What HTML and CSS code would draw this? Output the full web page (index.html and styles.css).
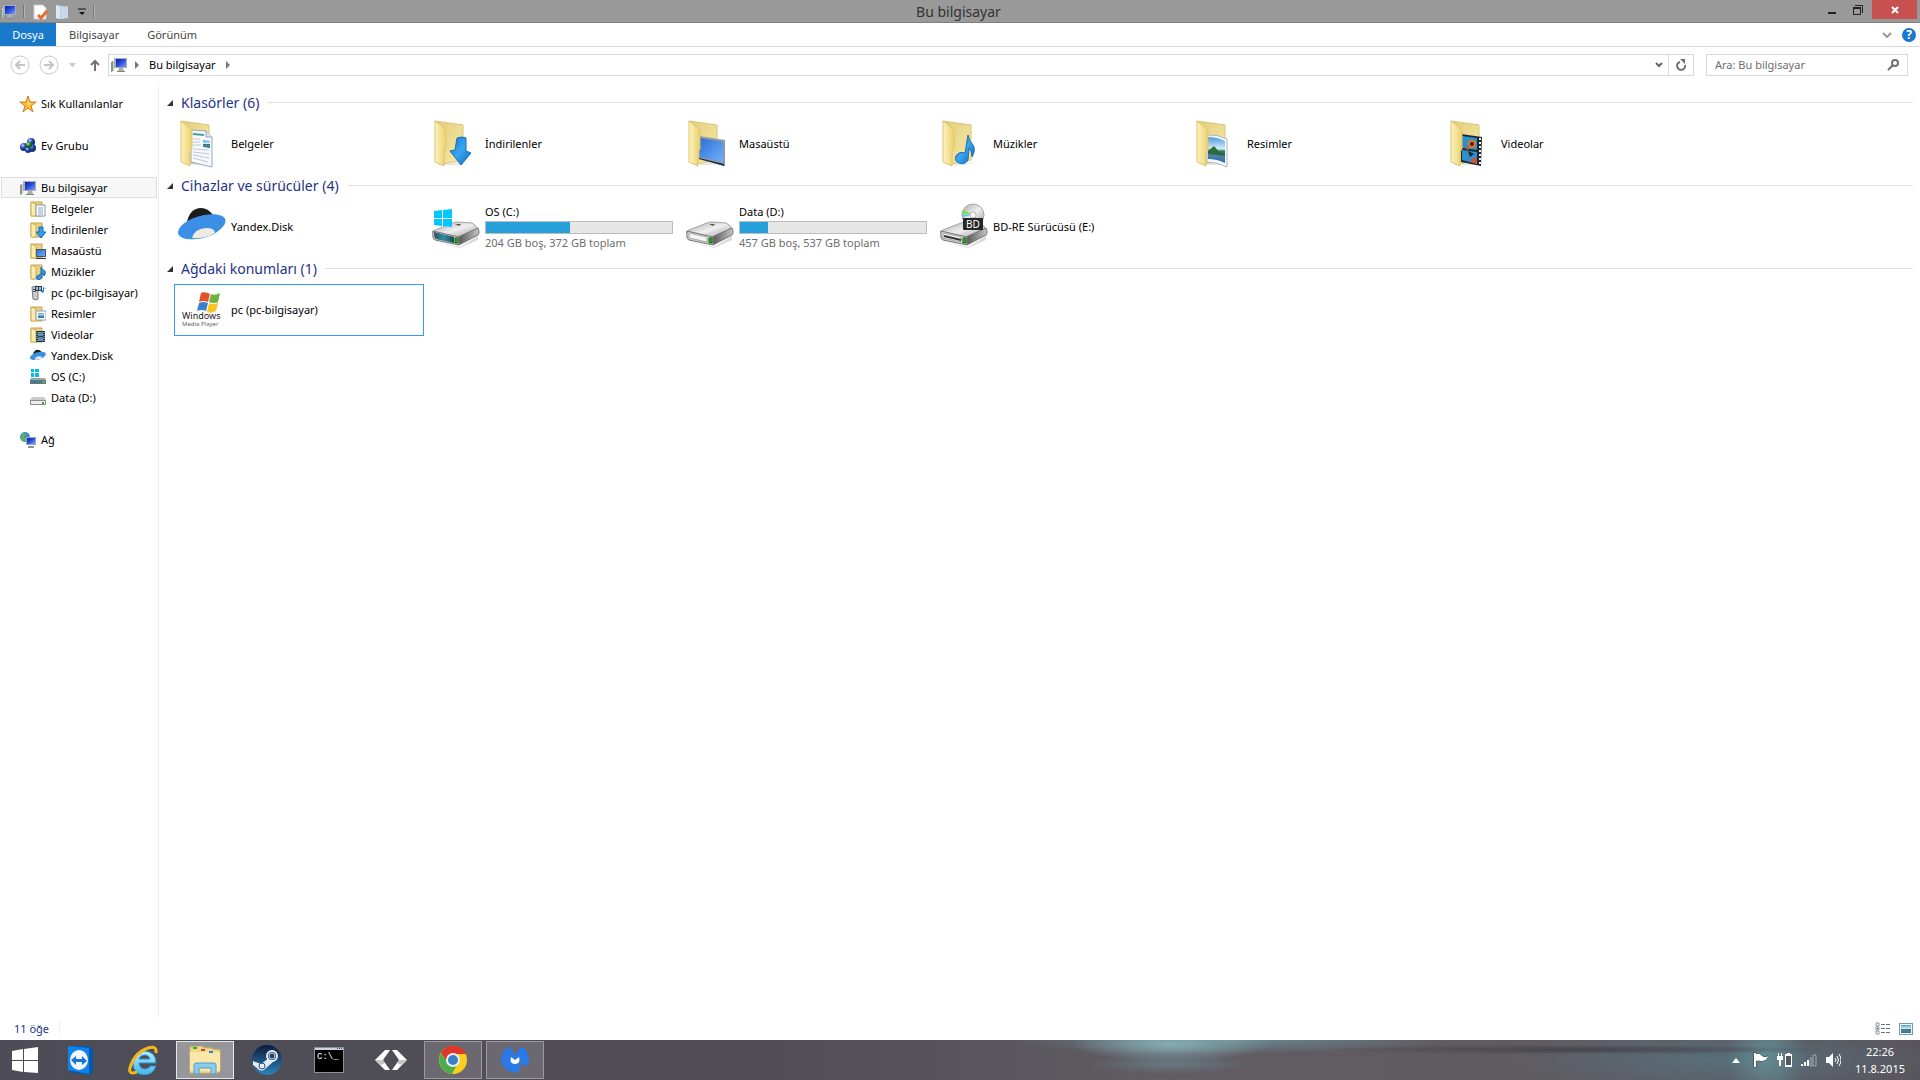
FILE: index.html
```html
<!DOCTYPE html>
<html lang="tr">
<head>
  <meta charset="UTF-8">
  <meta name="viewport" content="width=device-width, initial-scale=1.0">
  <title>Bu bilgisayar</title>
  <link rel="stylesheet" href="styles.css">
</head>
<body>
  <!-- shared icon shapes -->
  <svg class="defs" width="0" height="0" aria-hidden="true">
    <defs>
      <linearGradient id="flap" x1="0" x2="1"><stop offset="0" stop-color="#fdf3bd"/><stop offset="1" stop-color="#ecd070"/></linearGradient>
      <linearGradient id="back" x1="0" x2="1" y2="1"><stop offset="0" stop-color="#e3cd7e"/><stop offset="1" stop-color="#f7e9a6"/></linearGradient>
      <linearGradient id="screen" x1="0" x2="1" y2="1"><stop offset="0" stop-color="#0a1ea8"/><stop offset=".5" stop-color="#2a4fe0"/><stop offset="1" stop-color="#7fa2f5"/></linearGradient>
      <linearGradient id="desk" x1="0" x2="1" y2="1"><stop offset="0" stop-color="#2f6fd0"/><stop offset="1" stop-color="#6fb0ff"/></linearGradient>
      <linearGradient id="blue" x1="0" x2="1" y2="1"><stop offset="0" stop-color="#1b74c8"/><stop offset=".5" stop-color="#35a8f2"/><stop offset="1" stop-color="#1464b4"/></linearGradient>
      <linearGradient id="metal" x1="0" x2="1" y2="1"><stop offset="0" stop-color="#a8a8a8"/><stop offset=".5" stop-color="#efefef"/><stop offset="1" stop-color="#999"/></linearGradient>
      <linearGradient id="side" x1="0" x2="1"><stop offset="0" stop-color="#555"/><stop offset="1" stop-color="#c4c4c4"/></linearGradient>
      <linearGradient id="teal" x1="0" x2="1"><stop offset="0" stop-color="#2d5261"/><stop offset=".5" stop-color="#2f8fa6"/><stop offset="1" stop-color="#1d4550"/></linearGradient>
      <linearGradient id="sky" x2="0" y2="1"><stop offset="0" stop-color="#4c9be0"/><stop offset=".45" stop-color="#d5ecf6"/><stop offset=".55" stop-color="#2f7a4c"/><stop offset=".7" stop-color="#4a86ad"/><stop offset="1" stop-color="#2d6ba5"/></linearGradient>
      <linearGradient id="shade" x1="0" x2="1"><stop offset="0" stop-color="#999"/><stop offset="1" stop-color="#fff" stop-opacity="0"/></linearGradient>
      <linearGradient id="ie" x2="0" y2="1"><stop offset="0" stop-color="#b5ecff"/><stop offset="1" stop-color="#3fb4ec"/></linearGradient>
      <linearGradient id="steam" x2="0" y2="1"><stop offset="0" stop-color="#0d1a3c"/><stop offset="1" stop-color="#2a86bd"/></linearGradient>
      <radialGradient id="ball" cx=".35" cy=".3"><stop offset="0" stop-color="#cfe0ff"/><stop offset=".5" stop-color="#3c63c4"/><stop offset="1" stop-color="#16307c"/></radialGradient>
      <radialGradient id="greenball" cx=".35" cy=".3"><stop offset="0" stop-color="#d5f7d0"/><stop offset=".5" stop-color="#37a337"/><stop offset="1" stop-color="#14581b"/></radialGradient>
    </defs>

    <symbol id="pc" viewBox="0 0 16 16">
      <path d="M0 5l2-1v10l-2 1z" fill="#8d9294"/><path d="M2 4h1v10H2z" fill="#c9cccd"/><path d="M0 11h2v2H0z" fill="#48c048"/>
      <path d="M3 1h13v10H3z" fill="#a9aeb1"/><path d="M5 2h10v8H5z" fill="url(#screen)"/>
      <path d="M8 11h4l1 3H7z" fill="#a9adb0"/><path d="M6 14h8v1H6z" fill="#83888b"/>
    </symbol>

    <symbol id="folder" viewBox="0 0 48 48">
      <path d="M14 45l22-5 8-5-9 10z" fill="url(#shade)" opacity=".5"/>
      <path d="M3 1l28 4v35l-19 4z" fill="url(#back)" stroke="#dcc477"/>
    </symbol>
    <symbol id="front" viewBox="0 0 48 48">
      <path d="M3 1l8 6 3 4v18l-2 3v14l-9-4z" fill="url(#flap)" stroke="#ddc46d"/>
    </symbol>
    <symbol id="docs" viewBox="0 0 48 48">
      <use href="#folder"/>
      <path d="M13 10l15 1 6 6v30l-21-5z" fill="#f5f9fd" stroke="#9ba8b8"/><path d="M28 11v6h6" fill="#dce5ee" stroke="#9ba8b8"/>
      <path d="M15 14l11 1" stroke="#4f9e9a" stroke-width="2"/><path d="M15 19h7M15 22h7M15 25h8M15 29l16 1M15 32l16 2M15 35l16 3M15 38l15 4" stroke="#c0c9d6"/>
      <path d="M25 20l7 1v7l-7-1z" fill="url(#sky)"/>
      <use href="#front"/>
    </symbol>
    <symbol id="downloads" viewBox="0 0 48 48">
      <use href="#folder"/><use href="#front"/>
      <path d="M25 18q5-2 9 0v13l5 2-10 12-11-14 5-1z" fill="url(#blue)" stroke="#1d6db5"/>
    </symbol>
    <symbol id="desktop" viewBox="0 0 48 48">
      <use href="#folder"/>
      <path d="M13 16l26 4v26l-26-7z" fill="#8d99a6"/><path d="M14 18l23 4v20l-23-5z" fill="url(#desk)"/><path d="M13 38l25 6v2l-25-7z" fill="#1d2e42"/>
      <use href="#front"/>
    </symbol>
    <symbol id="music" viewBox="0 0 48 48">
      <use href="#folder"/><use href="#front"/>
      <path d="M28 15q1 6 5 10 3 5-1 12 0-6-3-9l-1 12q-3 5-9 3-5-2-3-7 3-5 9-3z" fill="url(#blue)" stroke="#1c6db5"/>
    </symbol>
    <symbol id="pictures" viewBox="0 0 48 48">
      <use href="#folder"/>
      <path d="M13 15q10-1 20 4v28q-10-5-20-5z" fill="#f5f8fa" stroke="#a9b6bf"/><path d="M14 17q9 0 17 4v22q-8-4-17-4z" fill="url(#sky)"/><path d="M14 31l6-5 5 6 6 1v3l-17-2z" fill="#2c6b42"/>
      <use href="#front"/>
    </symbol>
    <symbol id="videos" viewBox="0 0 48 48">
      <use href="#folder"/>
      <path d="M13 14l21 3-1 29-20-4z" fill="#20262c"/><path d="M14 16l15 2v12l-15-2zM14 30l15 2v12l-15-4z" fill="#2d8fcc"/>
      <circle cx="24" cy="24" r="4" fill="#e07a26"/><circle cx="24" cy="24" r="2" fill="#4b1d12"/><path d="M15 24l4 4 3-3-2 6zM22 41q4-6 7-1v4z" fill="#d7502d"/><path d="M20 31l6 3-4 3z" fill="#222"/>
      <path d="M32 18v28" stroke="#f3f3f3" stroke-width="2" stroke-dasharray="2 2"/>
      <use href="#front"/>
    </symbol>
    <symbol id="small-folder" viewBox="0 0 16 16">
      <path d="M1 1h11v14H1z" fill="#e9cf80" stroke="#c9a54c"/><path d="M1 1l5 2v12H1z" fill="#fbedb0" stroke="#cfae57"/>
    </symbol>

    <symbol id="yandex" viewBox="0 0 48 48">
      <path d="M9 19q3-14 14-14 7 0 12 7l-6 6z" fill="#1c1c1c"/>
      <path d="M0 30C0 17 32 7 44 13c9 5-1 14-10 19C21 38 1 38 0 30z" fill="#3b90e5"/>
      <path d="M14 35q2-9 14-10 9 0 9 5-9 6-23 5z" fill="#efebe3"/>
    </symbol>
    <symbol id="hdd" viewBox="0 0 48 48">
      <path d="M2 38l26 6 18-11v4L28 45z" fill="#999" opacity=".35"/>
      <path d="M0 29q1-1 3-2l18-7q2-1 5-1l14 1q3 1 6 6L26 35z" fill="url(#metal)" stroke="#a4a4a4"/>
      <path d="M26 34l20-9q1 1 1 5l-1 2-19 10z" fill="url(#side)" stroke="#777"/>
      <path d="M1 28l26 6v8L3 37q-3-1-2-9z" fill="#cfcfcf" stroke="#777"/>
      <path d="M3 30l18 4v5L3 35z" fill="#f5f5f5" stroke="#aaa"/>
      <path d="M23 35h3v5h-3z" fill="#1bbb1b" stroke="#245b24"/><path d="M23 21h6l-2 2z" fill="#555"/>
    </symbol>
  </svg>

  <header class="titlebar">
    <div class="quick">
      <svg class="i16"><use href="#pc"/></svg>
      <span class="sep"></span>
      <button type="button" aria-label="Özellikler"><svg class="i16" viewBox="0 0 16 16"><path d="M2 1h9l3 3v11H2z" fill="#fff" stroke="#ccc"/><path d="M6 11l3 3 6-7" fill="none" stroke="#ea6b32" stroke-width="3"/></svg></button>
      <button type="button" aria-label="Yeni klasör"><svg class="i16" viewBox="0 0 16 16"><path d="M2 1l7 1v13H2z" fill="#b8cbdf"/><path d="M6 3l7-1v12l-7 1z" fill="#c8d8e8"/><path d="M1 1l4 2v12l-4-1z" fill="#dee8f2"/></svg></button>
      <button type="button" aria-label="Özelleştir"><svg class="i8" viewBox="0 0 8 8"><path d="M0 1h8" stroke="#111" stroke-width="1"/><path d="M1 4h6L4 7z" fill="#111"/></svg></button>
      <span class="sep"></span>
    </div>
    <h1>Bu bilgisayar</h1>
    <div class="controls">
      <button type="button" aria-label="Simge durumuna küçült"><svg width="10" height="10"><path d="M1 7h8v2H1z" fill="#222"/></svg></button>
      <button type="button" aria-label="Önceki boyut"><svg width="10" height="10"><path d="M2 0h8v8H9V1H2zM0 2h8v8H0zm1 2v5h6V4z" fill="#222" fill-rule="evenodd"/></svg></button>
      <button type="button" class="close" aria-label="Kapat"><svg width="8" height="8"><path d="M1 1l6 6M7 1L1 7" stroke="#fff" stroke-width="2"/></svg></button>
    </div>
  </header>

  <div class="ribbon">
    <button type="button" class="file">Dosya</button>
    <button type="button">Bilgisayar</button>
    <button type="button">Görünüm</button>
    <div class="ribbon-end">
      <button type="button" aria-label="Şeridi genişlet"><svg width="10" height="6"><path d="M1 1l4 4 4-4" fill="none" stroke="#999" stroke-width="2"/></svg></button>
      <button type="button" class="help" aria-label="Yardım">?</button>
    </div>
  </div>

  <div class="address-row">
    <button type="button" aria-label="Geri"><svg width="20" height="20"><circle cx="10" cy="10" r="9" fill="none" stroke="#c8c8c8"/><path d="M15 10H6m4-4l-4 4 4 4" fill="none" stroke="#c4c4c4" stroke-width="2"/></svg></button>
    <button type="button" aria-label="İleri"><svg width="20" height="20"><circle cx="10" cy="10" r="9" fill="none" stroke="#c8c8c8"/><path d="M5 10h9m-4-4l4 4-4 4" fill="none" stroke="#c4c4c4" stroke-width="2"/></svg></button>
    <button type="button" class="recent" aria-label="Son konumlar"><svg width="7" height="4"><path d="M0 0h7L4 4H3z" fill="#ccc"/></svg></button>
    <button type="button" class="up" aria-label="Yukarı"><svg width="10" height="12"><path d="M5 12V2M1 6l4-4 4 4" fill="none" stroke="#707070" stroke-width="2"/></svg></button>
    <div class="address">
      <svg class="i16"><use href="#pc"/></svg>
      <svg class="crumb" width="4" height="8"><path d="M0 0l4 4-4 4z" fill="#777"/></svg>
      <a href="#">Bu bilgisayar</a>
      <svg class="crumb" width="4" height="8"><path d="M0 0l4 4-4 4z" fill="#777"/></svg>
      <button type="button" class="drop" aria-label="Önceki konumlar"><svg width="8" height="6"><path d="M1 1l3 3 3-3" fill="none" stroke="#666" stroke-width="2"/></svg></button>
      <button type="button" class="refresh" aria-label="Yenile"><svg width="12" height="12" viewBox="0 0 12 12"><path d="M5 3a4 4 0 1 0 5 3" fill="none" stroke="#707070" stroke-width="2"/><path d="M5 0h5v5z" fill="#707070"/></svg></button>
    </div>
    <form class="search">
      <input type="search" aria-label="Ara" placeholder="Ara: Bu bilgisayar">
      <button type="button" aria-label="Ara"><svg width="12" height="12"><circle cx="8" cy="4" r="3" fill="none" stroke="#707070" stroke-width="2"/><path d="M6 6l-5 5" stroke="#707070" stroke-width="2"/></svg></button>
    </form>
  </div>

  <div class="content">
    <nav class="tree">
      <a href="#" class="root"><svg class="i16" viewBox="0 0 16 16"><path d="M8 0l2 6h6l-5 4 2 6-5-4-5 4 2-6-5-4h6z" fill="#ffbd35" stroke="#d6781f"/><path d="M8 3l1 4h3l-4 2z" fill="#fff0a6"/></svg>Sık Kullanılanlar</a>
      <a href="#" class="root"><svg class="i16" viewBox="0 0 16 16"><circle cx="4" cy="9" r="4" fill="url(#ball)"/><circle cx="11" cy="4" r="4" fill="url(#ball)"/><circle cx="12" cy="10" r="4" fill="url(#ball)"/><circle cx="8" cy="12" r="3" fill="url(#ball)"/><circle cx="9" cy="7" r="3" fill="url(#greenball)"/></svg>Ev Grubu</a>
      <div class="branch">
        <a href="#" class="root selected"><svg class="i16"><use href="#pc"/></svg>Bu bilgisayar</a>
        <a href="#"><svg class="i16" viewBox="0 0 16 16"><use href="#small-folder"/><path d="M6 4h9v11H6z" fill="#fff" stroke="#8496a8"/><path d="M8 7h5M8 9h5M8 11h5M8 13h5" stroke="#8fa5ba"/></svg>Belgeler</a>
        <a href="#"><svg class="i16" viewBox="0 0 16 16"><use href="#small-folder"/><path d="M9 5h4v5h3l-5 6-5-6h3z" fill="#2ba0ee" stroke="#1768b0"/></svg>İndirilenler</a>
        <a href="#"><svg class="i16" viewBox="0 0 16 16"><use href="#small-folder"/><path d="M6 6h10v8H6z" fill="#44586a"/><path d="M7 7h8v6H7z" fill="url(#desk)"/><path d="M6 15h10v1H6z" fill="#334"/></svg>Masaüstü</a>
        <a href="#"><svg class="i16" viewBox="0 0 16 16"><use href="#small-folder"/><path d="M11 3q1 3 4 4 1 3-1 5 0-3-2-3v4q-2 4-5 2-2-3 2-4l2-1z" fill="#2a9ae8" stroke="#1768b0"/></svg>Müzikler</a>
        <a href="#"><svg class="i16" viewBox="0 0 16 16"><path d="M2 2l5-1 1 1v12l-2 1-3-1z" fill="#c9cccf" stroke="#777"/><path d="M3 4h3v1H3zM3 6h3v1H3z" fill="#555"/><path d="M5 1h7v5H5z" fill="#2b3b47"/><path d="M6 2h2v3H6zM9 2h2v3H9z" fill="#9cc0d4"/><path d="M13 0q0 3 3 4-1-2-2-1v4q-3 2-3-1l2-1z" fill="#1d82d6"/></svg>pc (pc-bilgisayar)</a>
        <a href="#"><svg class="i16" viewBox="0 0 16 16"><use href="#small-folder"/><path d="M6 5h10v9H6z" fill="#fff" stroke="#8ba0ae"/><path d="M8 7h6v5H8z" fill="url(#sky)"/></svg>Resimler</a>
        <a href="#"><svg class="i16" viewBox="0 0 16 16"><use href="#small-folder"/><path d="M6 4h9v11H6z" fill="#27333d"/><path d="M8 5h5v4H8zM8 10h5v4H8z" fill="#5b93b8"/><path d="M14 5v10M7 5v10" stroke="#ddd" stroke-dasharray="1 1"/></svg>Videolar</a>
        <a href="#"><svg class="i16"><use href="#yandex"/></svg>Yandex.Disk</a>
        <a href="#"><svg class="i16" viewBox="0 0 16 16"><path d="M1 0h3v3H1zM5 0h4v3H5zM1 4h3v4H1zM5 4h4v4H5z" fill="#00bff3"/><path d="M1 9h14l1 2v4H0v-4z" fill="#9da3a6"/><path d="M0 11h16v4H0z" fill="#6c7579"/><path d="M1 12h11v2H1z" fill="#2f8296"/><path d="M13 12h2v2h-2z" fill="#2fd12f"/></svg>OS (C:)</a>
        <a href="#"><svg class="i16" viewBox="0 0 16 16"><path d="M2 7h12l2 3v4H0v-4z" fill="#c9c9c9"/><rect x="0" y="10" width="16" height="5" rx="1" fill="#8b8b8b"/><path d="M1 11h14v3H1z" fill="#eee"/><path d="M12 12h2v2h-2z" fill="#2fa92f"/></svg>Data (D:)</a>
      </div>
      <a href="#" class="root"><svg class="i16" viewBox="0 0 16 16"><circle cx="5" cy="5" r="5" fill="#3e8ad8"/><path d="M2 1l4 1-2 3 3 2-3 3-3-3z" fill="#5cb747"/><path d="M6 5h10v8H6z" fill="#9aa8b4"/><path d="M7 6h8v6H7z" fill="url(#screen)"/><path d="M8 14h6v2H8z" fill="#8a9298"/></svg>Ağ</a>
    </nav>

    <main>
      <section>
        <h2><svg width="6" height="6"><path d="M6 0v6H0z" fill="#333"/></svg>Klasörler (6)</h2>
        <div class="items">
          <a href="#" class="item"><svg class="i48"><use href="#docs"/></svg>Belgeler</a>
          <a href="#" class="item"><svg class="i48"><use href="#downloads"/></svg>İndirilenler</a>
          <a href="#" class="item"><svg class="i48"><use href="#desktop"/></svg>Masaüstü</a>
          <a href="#" class="item"><svg class="i48"><use href="#music"/></svg>Müzikler</a>
          <a href="#" class="item"><svg class="i48"><use href="#pictures"/></svg>Resimler</a>
          <a href="#" class="item"><svg class="i48"><use href="#videos"/></svg>Videolar</a>
        </div>
      </section>
      <section>
        <h2><svg width="6" height="6"><path d="M6 0v6H0z" fill="#333"/></svg>Cihazlar ve sürücüler (4)</h2>
        <div class="items">
          <a href="#" class="item"><svg class="i48"><use href="#yandex"/></svg>Yandex.Disk</a>
          <a href="#" class="item">
            <svg class="i48" viewBox="0 0 48 48"><use href="#hdd"/><path d="M2 29l20 5v6L4 36q-2-1-2-7z" fill="url(#teal)"/><path d="M2 8l8-1v8H2zM11 7l9-1v9h-9zM2 16h8v7l-8-1zM11 16h9v8l-9-1z" fill="#00c8ff"/></svg>
            <span class="drive">OS (C:)<progress value="168" max="372" aria-label="OS (C:) doluluk"></progress><small>204 GB boş, 372 GB toplam</small></span>
          </a>
          <a href="#" class="item">
            <svg class="i48"><use href="#hdd"/></svg>
            <span class="drive">Data (D:)<progress value="80" max="537" aria-label="Data (D:) doluluk"></progress><small>457 GB boş, 537 GB toplam</small></span>
          </a>
          <a href="#" class="item">
            <svg class="i48" viewBox="0 0 48 48">
              <use href="#hdd"/><path d="M4 33l17 4" stroke="#333" stroke-width="2"/>
              <circle cx="33" cy="12" r="11" fill="url(#metal)" stroke="#a5a5a5"/><path d="M33 12L23 7l-1 3z" fill="#75e03a"/><path d="M33 12l-11-1v3z" fill="#63c7ec"/>
              <circle cx="33" cy="12" r="3" fill="#fff" stroke="#b5b5b5"/>
              <rect x="23" y="15" width="20" height="12" rx="1" fill="#262626"/><text class="bd-text" x="33" y="25" text-anchor="middle">BD</text>
            </svg>BD-RE Sürücüsü (E:)</a>
        </div>
      </section>
      <section>
        <h2><svg width="6" height="6"><path d="M6 0v6H0z" fill="#333"/></svg>Ağdaki konumları (1)</h2>
        <div class="items">
          <a href="#" class="item focused">
            <svg class="i48" viewBox="0 0 48 48">
              <path d="M23 7q4-2 9 1l-2 8q-4-2-9 0z" fill="#e5502a"/><path d="M33 8q4 2 9-1l-2 9q-4 2-9 0z" fill="#6cb33e"/>
              <path d="M21 17q4-2 9 0l-2 8q-4-2-9 0z" fill="#3c7fd2"/><path d="M31 17q4 2 9 0l-2 8q-5 3-9 1z" fill="#f8c422"/>
              <text class="wmp-name" x="4" y="33">Windows</text><text class="wmp-sub" x="4" y="40">Media Player</text>
            </svg>pc (pc-bilgisayar)</a>
        </div>
      </section>
    </main>
  </div>

  <div class="status">
    <span class="count">11 öğe</span>
    <div class="views">
      <button type="button" aria-label="Ayrıntılar"><svg width="16" height="14"><path d="M1 1h3v3H1zM1 5h3v3H1zM1 9h3v3H1z" fill="#fff" stroke="#8499a3"/><path d="M2 6h1v1H2z" fill="#d22"/><path d="M6 2h4v1H6zM11 2h4v1h-4zM6 6h4v1H6zM11 6h4v1h-4zM6 10h4v1H6zM11 10h4v1h-4z" fill="#5f7480"/></svg></button>
      <button type="button" aria-label="Büyük simgeler"><svg width="14" height="12"><path d="M0 0h14v12H0z" fill="#7b97a6"/><path d="M1 1h12v10H1z" fill="#fff"/><path d="M2 2h10v8H2z" fill="url(#sky)"/></svg></button>
    </div>
  </div>

  <footer class="taskbar">
    <button type="button" class="start" aria-label="Başlat"><svg width="26" height="26"><path d="M0 4l11-2v11H0zM12 2l14-2v13H12zM0 14h11v11L0 23zM12 14h14v12l-14-1z" fill="#fff"/></svg></button>
    <div class="apps">
      <button type="button" aria-label="TeamViewer"><svg width="28" height="32" viewBox="0 0 28 32"><path d="M2 2l20 0 4 3v23l-3 3-21-3z" fill="#0757ad"/><path d="M1 2l21 2v26L1 26z" fill="#0d83ee"/><ellipse cx="12" cy="16" rx="9" ry="10" fill="#f2f6fb"/><path d="M4 16l5-4v3h6v-3l5 5-5 4v-3H9v3z" fill="#1277d8"/></svg></button>
      <button type="button" aria-label="Internet Explorer"><svg width="30" height="30" viewBox="0 0 30 30"><path d="M28 18H11q1 6 6 6 4 0 5-3h6q-3 9-12 9-11-1-11-12Q6 6 17 6q11 1 11 12zM11 14h11q-1-4-5-4-5 0-6 4z" fill="url(#ie)" stroke="#2792cc"/><path d="M28 8q1-8-8-5Q6 8 2 23q-2 7 7 4" fill="none" stroke="#f4b71d" stroke-width="3"/></svg></button>
      <button type="button" class="running active" aria-label="Dosya Gezgini"><svg width="32" height="28" viewBox="0 0 32 28"><path d="M1 1l12-1 2 2h7l1 1 8 1v21l-2 2H1z" fill="#f1d98b" stroke="#d8b65c"/><path d="M1 6h30v19H1z" fill="#fae8a8"/><path d="M4 1h4v2H4z" fill="#19b52a"/><path d="M12 3h4v2h-4z" fill="#e23a31"/><path d="M20 5h4v2h-4z" fill="#1f86e4"/><path d="M5 28v-9q0-2 2-2h18q2 0 2 2v9h-5v-6H10v6z" fill="#8dcbea" stroke="#4e9cca"/></svg></button>
      <button type="button" aria-label="Steam"><svg width="30" height="30" viewBox="0 0 30 30"><circle cx="15" cy="15" r="15" fill="url(#steam)"/><path d="M1 16l8 3 8-6 5 3-9 8q-4 4-8-1l-4-3z" fill="#e7eaf0"/><circle cx="20" cy="11" r="5" fill="#24406b" stroke="#e7eaf0" stroke-width="2"/><circle cx="20" cy="11" r="3" fill="none" stroke="#cfd6e2"/><circle cx="10" cy="21" r="3" fill="none" stroke="#24517f"/></svg></button>
      <button type="button" aria-label="Komut İstemi"><svg width="30" height="26" viewBox="0 0 30 26"><path d="M0 0h30v26H0z" fill="#8c9296"/><path d="M1 1h28v2H1z" fill="#c8d5dd"/><path d="M1 3h28v22H1z" fill="#000"/><path d="M23 1h1v1h-1zM25 1h1v1h-1zM27 1h1v1h-1z" fill="#35506c"/><text class="cmd-text" x="3" y="12">C:\_</text></svg></button>
      <button type="button" aria-label="Unity"><svg width="32" height="20" viewBox="0 0 32 20"><path d="M0 10L10 0h5L8 10l7 10h-5z" fill="#fff"/><path d="M32 10L22 0h-5l7 10-7 10h5z" fill="#fff"/><path d="M0 10h8l2 3-4 2zM32 10h-8l-2 3 4 2z" fill="#c3c3c3"/></svg></button>
      <button type="button" class="running" aria-label="Chrome"><svg width="28" height="28" viewBox="0 0 28 28"><circle cx="14" cy="14" r="14" fill="#f8cf1c"/><path d="M2 7a14 14 0 0 1 25 1H14a6 6 0 0 0-5 9z" fill="#e0352b"/><path d="M2 7a14 14 0 0 0 11 21l6-11a6 6 0 0 1-10 0z" fill="#4bae4a"/><circle cx="14" cy="14" r="6" fill="#3a7fca" stroke="#e9eef3" stroke-width="2"/></svg></button>
      <button type="button" class="running" aria-label="Malwarebytes"><svg width="28" height="26" viewBox="0 0 28 26"><path d="M8 0q3 1 6 9 3-8 7-9 7 4 7 12 0 5-3 8l-5-5-2 10q-6 2-12-2-6-4-6-11Q0 4 8 0z" fill="#2a79e6"/><path d="M10 10l4 3 4-3q2 7-4 7t-4-7z" fill="#fff"/></svg></button>
    </div>
    <div class="tray">
      <button type="button" aria-label="Gizli simgeleri göster"><svg width="8" height="5"><path d="M4 0l4 5H0z" fill="#fff"/></svg></button>
      <button type="button" aria-label="İşlem Merkezi"><svg width="16" height="16"><path d="M1 1h2v14H1zM3 2q3-1 5 1l1 1q3 2 6 0-1 5-7 5-2-1-5 0z" fill="#fff" stroke="#333" stroke-width="1" paint-order="stroke"/></svg></button>
      <button type="button" aria-label="Pil"><svg width="16" height="16"><path d="M0 4h6v4H4v6H2V8H0zM1 1h1v3H1zM4 1h1v3H4z" fill="#fff"/><path d="M8 2h2V1h3v1h2v13H8z" fill="#fff"/><path d="M9 4h5v9H9z" fill="#50595e"/></svg></button>
      <button type="button" aria-label="Ağ"><svg width="16" height="14"><path d="M0 11h2v2H0zM3 9h2v4H3zM6 7h2v6H6z" fill="#fff"/><path d="M9 5h2v8H9zM12 2h3v11h-3z" fill="#5d666b" stroke="#9ba5a9"/></svg></button>
      <button type="button" aria-label="Ses"><svg width="16" height="16"><path d="M1 5h3l4-4v14l-4-4H1z" fill="#fff"/><path d="M10 6q2 2 0 4M12 4q3 4 0 8M14 2q4 6 0 12" fill="none" stroke="#fff"/></svg></button>
      <div class="clock"><time>22:26</time><time>11.8.2015</time></div>
    </div>
  </footer>
</body>
</html>
```
FILE: styles.css
```css
* {
  box-sizing: border-box;
}

body {
  display: flex;
  flex-direction: column;
  min-height: 100vh;
  margin: 0;
  background-color: #fff;
  color: #000;
  font-family: "Noto Sans", "Open Sans", sans-serif;
  font-size: 11px;
  line-height: 16px;
}

button {
  display: flex;
  align-items: center;
  justify-content: center;
  padding: 0;
  border: none;
  background: none;
  color: inherit;
  font: inherit;
}

a {
  color: inherit;
  text-decoration: none;
}

svg {
  display: block;
  flex: none;
}

.defs {
  position: absolute;
}

.i8 { width: 8px; height: 8px; }
.i16 { width: 16px; height: 16px; }
.i48 { width: 48px; height: 48px; }

/* title bar */
.titlebar {
  display: grid;
  grid-template-columns: 1fr auto 1fr;
  height: 23px;
  padding-right: 3px;
  background-color: #999;
  border-bottom: 1px solid #808080;
}

.titlebar h1 {
  margin: 0;
  color: #333;
  font-size: 14px;
  font-weight: normal;
  line-height: 23px;
}

.quick {
  display: flex;
  align-items: center;
  gap: 7px;
}

.sep {
  width: 2px;
  height: 13px;
  background-color: #777;
  border-right: 1px solid #b5b5b5;
}

.controls {
  display: flex;
  justify-content: flex-end;
  align-items: flex-start;
}

.controls button {
  width: 26px;
  height: 19px;
}

.controls .close {
  width: 45px;
  margin-left: 1px;
  background-color: #c75050;
}

/* ribbon tabs */
.ribbon {
  display: flex;
  height: 24px;
  border-bottom: 1px solid #dadbdc;
  color: #444;
}

.ribbon > button {
  padding: 0 13px;
}

.ribbon > button + button + button {
  margin-left: 2px;
}

.ribbon .file {
  width: 56px;
  background-color: #1979ca;
  color: #fff;
}

.ribbon-end {
  display: flex;
  align-items: center;
  gap: 10px;
  margin-left: auto;
  padding-right: 4px;
}

.ribbon .help {
  width: 14px;
  height: 14px;
  border-radius: 50%;
  background-color: #1979ca;
  color: #fff;
  font-size: 12px;
  font-weight: bold;
}

/* address bar */
.address-row {
  display: flex;
  align-items: center;
  gap: 9px;
  height: 37px;
  padding: 0 12px 1px 10px;
}

.recent {
  margin-left: 1px;
}

.up {
  margin: 0 -1px 0 5px;
}

.address {
  display: flex;
  align-items: center;
  flex: 1;
  height: 22px;
  border: 1px solid #d9d9d9;
  padding-left: 2px;
}

.crumb {
  margin: 0 8px;
}

.address a {
  padding: 0 2px;
}

.drop {
  width: 18px;
  height: 20px;
  margin-left: auto;
}

.refresh {
  width: 25px;
  height: 20px;
  border-left: 1px solid #d9d9d9;
}

.search {
  display: flex;
  width: 202px;
  height: 22px;
  margin-left: 3px;
  padding: 0 8px;
  border: 1px solid #d9d9d9;
}

.search input {
  flex: 1;
  min-width: 0;
  padding: 0;
  border: none;
  outline: none;
  font: inherit;
}

.search input::placeholder {
  color: #6d6d6d;
}

/* navigation tree and file list */
.content {
  display: flex;
  flex: 1;
}

.tree {
  display: flex;
  flex-direction: column;
  gap: 21px;
  width: 159px;
  padding: 9px 1px 0;
  border-right: 1px solid #f0f0f0;
}

.tree a {
  display: flex;
  align-items: center;
  gap: 5px;
  height: 21px;
  padding-left: 28px;
  border: 1px solid transparent;
  white-space: nowrap;
}

.tree .root {
  padding-left: 18px;
}

.tree .selected {
  border-color: #dedede;
  background-color: #f7f7f7;
}

main {
  flex: 1;
  padding: 3px 7px 0 8px;
}

h2 {
  display: flex;
  align-items: center;
  gap: 8px;
  height: 31px;
  margin: 0;
  color: #1e3287;
  font-size: 14px;
  font-weight: normal;
}

h2::after {
  content: "";
  flex: 1;
  height: 1px;
  background-color: #e2e2e2;
}

.items {
  display: flex;
  flex-wrap: wrap;
  gap: 4px;
  padding-left: 7px;
}

.item {
  display: flex;
  align-items: center;
  gap: 5px;
  width: 250px;
  height: 52px;
  padding: 0 4px 0 3px;
  border: 1px solid transparent;
}

.item.focused {
  border-color: #3399ff;
}

.drive {
  display: flex;
  flex: 1;
  flex-direction: column;
  gap: 1px;
}

.drive small {
  color: #6d6d6d;
  font-size: 11px;
}

progress {
  width: 100%;
  height: 13px;
  border: 1px solid #bcbcbc;
  background-color: #e6e6e6;
  appearance: none;
}

progress::-webkit-progress-bar {
  background-color: #e6e6e6;
}

progress::-webkit-progress-value {
  background-color: #26a0da;
}

.bd-text {
  fill: #fff;
  font-size: 10px;
}

.wmp-name {
  fill: #222;
  font-size: 9px;
}

.wmp-sub {
  fill: #666;
  font-size: 6px;
}

.cmd-text {
  fill: #fff;
  font-family: "Liberation Mono", monospace;
  font-size: 9px;
}

/* status bar */
.status {
  display: flex;
  align-items: center;
  height: 23px;
  padding: 0 7px 0 14px;
  color: #1e3287;
}

.count {
  padding-right: 10px;
  border-right: 1px solid #eee;
}

.views {
  display: flex;
  align-items: center;
  gap: 8px;
  margin-left: auto;
}

/* taskbar */
.taskbar {
  display: flex;
  align-items: center;
  height: 40px;
  padding: 0 15px 0 12px;
  background-color: #524f57;
  background-image:
    radial-gradient(ellipse 260px 5px at 82% 24%, #47454c, #47454c00),
    radial-gradient(ellipse 100px 18px at 61% 10%, #84adb3, #84adb300),
    radial-gradient(ellipse 220px 14px at 64% 0, #6b929bcc, #6b929b00),
    radial-gradient(ellipse 80px 10px at 61% 60%, #6b8d9599, #6b8d9500),
    radial-gradient(ellipse 40px 50px at 92% 40%, #66949bcc, #66949b00),
    radial-gradient(ellipse 220px 34px at 90% 50%, #557480cc, #55748000),
    linear-gradient(90deg, #4e4d57, #504d55 40%, #605c62 60%, #5f5a60 88%, #59545b);
}

.start {
  width: 26px;
}

.apps {
  display: flex;
  gap: 4px;
  margin-left: 14px;
}

.apps button {
  width: 58px;
  height: 38px;
}

.apps .running {
  border: 1px solid #9b9a9e;
  background-color: #6b696f;
}

.apps .active {
  border-color: #e6e6e6;
  background-color: #96959a;
}

.tray {
  display: flex;
  align-items: center;
  gap: 8px;
  margin-left: auto;
}

.tray button:first-child {
  margin-right: 5px;
}

.clock {
  display: flex;
  flex-direction: column;
  margin-left: 6px;
  color: #fff;
  text-align: center;
  line-height: 17px;
}
```
